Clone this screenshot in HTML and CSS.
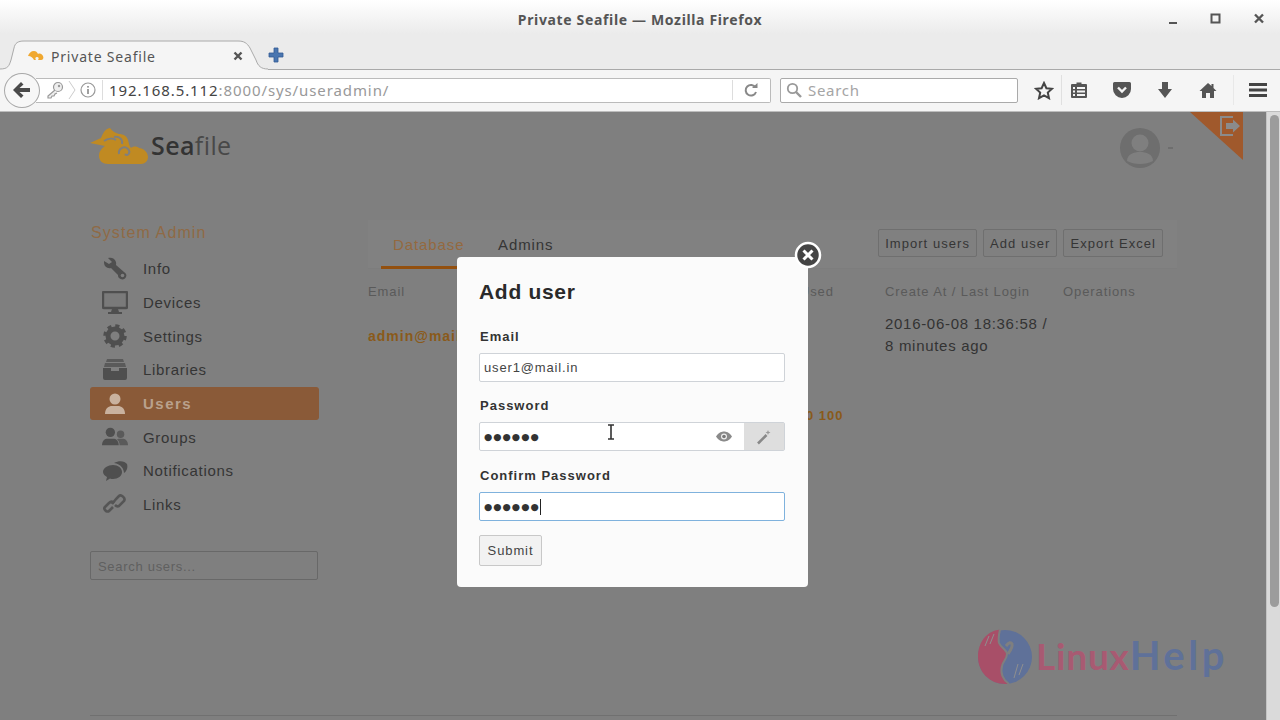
FILE: index.html
```html
<!DOCTYPE html>
<html lang="en">
<head>
    <meta charset="UTF-8">
    <title>Private Seafile - Mozilla Firefox</title>
    <link rel="stylesheet" href="styles.css">
</head>
<body>
    <!-- window title -->
    <div class="titlebar">
        <div class="win-title">Private Seafile — Mozilla Firefox</div>
        <div class="win-btns">
            <svg width="14" height="14" viewBox="0 0 14 14"><rect x="3" y="10" width="8" height="2" fill="#555"/></svg>
            <svg width="14" height="14" viewBox="0 0 14 14"><rect x="2.500" y="2.500" width="8" height="8" fill="none" stroke="#555" stroke-width="2"/></svg>
            <svg width="14" height="14" viewBox="0 0 14 14"><path d="M3 2.500l8 8M11 2.500l-8 8" stroke="#555" stroke-width="2.400"/></svg>
        </div>
    </div>

    <!-- tabs -->
    <div class="tabbar">
        <div class="tab">
            <svg class="tab-bg" width="272" height="30" viewBox="0 0 272 30"><path d="M0 30V29C8 29 9 26 11 20L14 8C15 3 18 1 24 1H238C244 1 247 3 250 8L256 20C258 26 261 29 268 29V30z" fill="#f5f5f5"/><path d="M0 29C8 29 9 26 11 20L14 8C15 3 18 1 24 1H238C244 1 247 3 250 8L256 20C258 26 261 29 268 29" fill="none" stroke="#aaa"/></svg>
            <svg class="tab-fav" width="18" height="12" viewBox="0 0 18 12"><path d="M1 6C2 3 4 1 7 1c2 0 3 1 4 3 2-1 4 0 5 2 1 2 0 4-2 4h-3c1-1 1-3-1-3-2 0-2 2-1 3H7C6 8 4 6 1 6z" fill="#f0a830"/></svg>
            <span class="tab-name">Private Seafile</span>
            <svg class="tab-close" width="10" height="10" viewBox="0 0 10 10"><path d="M1.500 1.500l7 7M8.500 1.500l-7 7" stroke="#555" stroke-width="2.400"/></svg>
        </div>
        <svg class="new-tab" width="16" height="16" viewBox="0 0 16 16"><path d="M6 1h4v5h5v4h-5v5H6v-5H1V6h5z" fill="#4a76b0" stroke="#345c96" stroke-width=".8"/></svg>
    </div>

    <!-- navigation -->
    <div class="navbar">
        <div class="back-btn">
            <svg width="20" height="18" viewBox="0 0 20 18"><path d="M9 1l2.500 2.500L7.500 7H18v4H7.500l4 3.500L9 17 1 9z" fill="#4a4a4a"/></svg>
        </div>
        <div class="urlbar">
            <svg class="url-key" width="20" height="18" viewBox="0 0 20 18"><circle cx="13" cy="6" r="4.500" fill="#eee" stroke="#999" stroke-width="1.200"/><circle cx="14" cy="5" r="1.200" fill="#999"/><path d="M10 9l-7 6v2h3l1-2h2l1-2 2-1" fill="#eee" stroke="#999" stroke-width="1.200"/></svg>
            <svg class="url-chev" width="8" height="24" viewBox="0 0 8 24"><path d="M1 3l6 9-6 9" fill="none" stroke="#ccc"/></svg>
            <svg class="url-info" width="16" height="16" viewBox="0 0 16 16"><circle cx="8" cy="8" r="7" fill="none" stroke="#999" stroke-width="1.200"/><rect x="7.200" y="7" width="1.600" height="5" fill="#888"/><rect x="7.200" y="4" width="1.600" height="1.600" fill="#888"/></svg>
            <span class="url-sep"></span>
            <div class="url-text">192.168.5.112<span class="url-path">:8000/sys/useradmin/</span></div>
            <span class="url-sep"></span>
            <svg class="url-reload" width="16" height="16" viewBox="0 0 16 16"><path d="M12.500 5.500A5.300 5.300 0 1 0 13 10" fill="none" stroke="#888" stroke-width="2"/><path d="M9 6h5.500V1z" fill="#888"/></svg>
        </div>
        <div class="searchbar">
            <svg width="16" height="16" viewBox="0 0 16 16"><circle cx="6.500" cy="6.500" r="4.700" fill="none" stroke="#999" stroke-width="1.800"/><path d="M10 10l5 5" stroke="#999" stroke-width="2.400"/></svg>
            <span>Search</span>
        </div>
        <div class="tools">
            <div class="tool tool-star"><svg width="20" height="19" viewBox="0 0 20 19"><path d="M10 2l2.400 5.200 5.600.6-4.200 3.800 1.200 5.600L10 14.400 5 17.200l1.200-5.600L2 7.800l5.600-.6z" fill="none" stroke="#444" stroke-width="2"/></svg></div>
            <div class="tool tool-list"><svg width="18" height="18" viewBox="0 0 18 18"><path d="M6.500 3V1.500h5V3H16a1 1 0 0 1 1 1v12a1 1 0 0 1-1 1H2a1 1 0 0 1-1-1V4a1 1 0 0 1 1-1z" fill="#555"/><path d="M3 6h2v2H3zM7 6h8v2H7zM3 9.500h2v2H3zM7 9.500h8v2H7zM3 13h2v2H3zM7 13h8v2H7z" fill="#f5f5f5"/></svg></div>
            <div class="tool tool-pocket"><svg width="20" height="18" viewBox="0 0 20 18"><path d="M2.500 1h15A1.500 1.500 0 0 1 19 2.500V8a9 9 0 0 1-18 0V2.500A1.500 1.500 0 0 1 2.500 1z" fill="#555"/><path d="M6 6.500l4 4 4-4" fill="none" stroke="#f5f5f5" stroke-width="2.400"/></svg></div>
            <div class="tool tool-down"><svg width="18" height="18" viewBox="0 0 18 18"><path d="M6 1h6v7h4l-7 9-7-9h4z" fill="#555"/></svg></div>
            <div class="tool tool-home"><svg width="18" height="17" viewBox="0 0 18 17"><path d="M9 1L0.500 9H3v7h4v-5h4v5h4V9h2.500l-3-3V2h-2v2z" fill="#555"/></svg></div>
            <div class="tool tool-menu"><svg width="20" height="16" viewBox="0 0 20 16"><path d="M1 1h18v3H1zM1 6.500h18v3H1zM1 12h18v3H1z" fill="#444"/></svg></div>
        </div>
    </div>

    <!-- page behind the dialog -->
    <div class="viewport">
        <div class="page">
            <div class="header">
                <div class="logo">
                    <svg width="58" height="36" viewBox="0 0 58 36"><path d="M0 15L11 10C13 5 15 1 20 0c2 3 5 5 9 6 4 0 8 2 9 6 1 3 1 6 3 8 2-2 6-2 8 0 4 0 9 4 9 9 0 4-3 7-7 7H18c-5 0-9-3-9-8 0-5 3-8 6-10l-5-1z" fill="#c08a22"/><path d="M14 13c4-3 9-3 12-1M24 9c5-1 9 2 8 7M29 26c-1-5 5-9 9-5 3 3 0 8-3 5" fill="none" stroke="#7f7f7f" stroke-width="2"/></svg>
                    <div class="logo-text"><b>Sea</b>file</div>
                </div>
                <div class="avatar">
                    <svg width="42" height="40" viewBox="0 0 42 40"><circle cx="20" cy="20" r="20" fill="#6e6e6e"/><circle cx="20" cy="15" r="8.500" fill="#7f7f7f"/><path d="M7 33c0-7 7-9 13-9s13 2 13 9c-7 4-19 4-26 0z" fill="#7f7f7f"/></svg>
                    <span class="avatar-dash"></span>
                </div>
            </div>

            <div class="columns">
                <div class="side">
                    <h3 class="side-title">System Admin</h3>
                    <ul class="side-nav">
                        <li><svg viewBox="0 0 26 24"><path d="M2 4l5 3 3-2-4-4c3-1 7 0 8 4 .3 1 .2 2 0 3l8 7c2 1 3 3 2 5-1 3-5 3-7 1-1-1-1-2-1-3l-7-7c-2 .5-4 0-6-2-1-2-1-3-1-5z" fill="#4f4f4f"/><circle cx="20.500" cy="18.500" r="1.800" fill="#7f7f7f"/></svg>Info</li>
                        <li><svg viewBox="0 0 26 24"><rect x="1" y="1" width="24" height="16" rx="1" fill="#7a7a7a" stroke="#4f4f4f" stroke-width="2.400"/><path d="M10 18h6l1 3h3v2H6v-2h3z" fill="#4f4f4f"/></svg>Devices</li>
                        <li><svg viewBox="0 0 26 24"><circle cx="13" cy="12" r="7" fill="none" stroke="#4f4f4f" stroke-width="5"/><circle cx="13" cy="12" r="10" fill="none" stroke="#4f4f4f" stroke-width="3.500" stroke-dasharray="4 3.850"/></svg>Settings</li>
                        <li><svg viewBox="0 0 26 24"><path d="M5 1h16l1 3H4zM3 5h20l1 4H2z" fill="#5a5a5a"/><path d="M1 10h8v3h8v-3h8v10a2 2 0 0 1-2 2H3a2 2 0 0 1-2-2z" fill="#4f4f4f"/></svg>Libraries</li>
                        <li class="active"><svg viewBox="0 0 26 24"><circle cx="13" cy="7" r="5.500" fill="#c9b29f"/><path d="M3 22c0-6 4-8 7-8h6c3 0 7 2 7 8z" fill="#c9b29f"/></svg>Users</li>
                        <li><svg viewBox="0 0 28 24"><circle cx="9" cy="7" r="5" fill="#4f4f4f"/><path d="M0 21c0-5 3-7 6-7h6c3 0 6 2 6 7z" fill="#4f4f4f"/><circle cx="20" cy="9" r="4" fill="#5a5a5a"/><path d="M19 21c0-3-1-5-3-6 1-1 2-1 3-1h3c3 0 6 2 6 7z" fill="#5a5a5a"/></svg>Groups</li>
                        <li><svg viewBox="0 0 26 24"><path d="M10 7c5 0 9 3 9 7s-4 7-9 7c-1 0-2 0-3-.5L3 23l1-4c-2-1-4-3-4-5 0-4 5-7 10-7z" transform="translate(1 -1)" fill="#4f4f4f"/><path d="M12 4c5-3 11-2 13 1 1 3 0 7-3 9 0-4-3-9-10-10z" fill="#4f4f4f"/></svg>Notifications</li>
                        <li><svg viewBox="0 0 26 24"><g fill="none" stroke="#555" stroke-width="2.600"><path d="M11 14l-1 1-3 3c-2 2-6-2-4-4l4-4c2-2 4-1 5 0"/><path d="M10 11l4-5 3-3c2-2 7 2 5 5l-5 5c-2 1-3 0-4-1"/></g></svg>Links</li>
                    </ul>
                    <div class="side-search">Search users...</div>
                </div>

                <div class="main">
                    <div class="tabs">
                        <div class="tab-links">
                            <span class="tab-link on">Database</span>
                            <span class="tab-link">Admins</span>
                        </div>
                        <div class="tab-btns">
                            <span class="btn">Import users</span>
                            <span class="btn">Add user</span>
                            <span class="btn">Export Excel</span>
                        </div>
                    </div>
                    <div class="user-table">
                        <div class="th">Email</div>
                        <div class="th">Space Used</div>
                        <div class="th">Create At / Last Login</div>
                        <div class="th">Operations</div>
                        <div class="td-mail">admin@mail.in</div>
                        <div class="td-used">0 100</div>
                        <div class="td-date">2016-06-08 18:36:58 /<br>8 minutes ago</div>
                        <div></div>
                    </div>
                </div>
            </div>
            <div class="footer-line"></div>

            <div class="watermark">
                <svg width="58" height="58" viewBox="0 0 58 58"><circle cx="29" cy="29" r="27" fill="#5f7199"/><path d="M24 1.500C10 3 2 15 2 29c0 15 12 27 27 27 2 0 3 0 4-.5-6-4-9-11-7-18 1-5 5-7 5-12 0-4-6-6-8-11-1-4 0-9 1-13.500z" fill="#a84f68"/><path d="M24 1.500c-1 4.500-2 9.500-1 13.500 2 5 8 7 8 11 0 5-4 7-5 12-2 7 1 14 7 18" fill="none" stroke="#7f7f7f" stroke-width="2"/><path d="M13 8l-4 10M18 6l-4 10M42 36l-4 14M47 36l-4 11" stroke="#8f8f8f" stroke-width="1"/><path d="M30 18c3-4 5-4 6-2 1 3-2 7-4 10" fill="none" stroke="#7f7f7f" stroke-width="3"/></svg>
                <span class="wm-text"><span class="wm-a">Linux</span><span class="wm-b">Help</span></span>
            </div>

            <div class="corner">
                <svg class="corner-icon" width="22" height="20" viewBox="0 0 22 20"><path d="M14 1H2v18h12" fill="none" stroke="#8b8b8b" stroke-width="2"/><path d="M7 7h7V3.500l7 6.500-7 6.500V13H7z" fill="#8b8b8b"/></svg>
            </div>
        </div>

        <div class="scrollbar"><div class="thumb"></div></div>

        <!-- add user dialog -->
        <div class="modal">
            <h3 class="modal-title">Add user</h3>
            <label class="field-label">Email</label>
            <div class="field"><span class="field-val">user1@mail.in</span></div>
            <label class="field-label">Password</label>
            <div class="field field-pass">
                <span class="field-val dots">●●●●●●</span>
                <svg class="eye" width="16" height="11" viewBox="0 0 16 11"><path d="M0 5.500C3 1 6 .5 8 .5s5 .5 8 5c-3 4.500-6 5-8 5s-5-.5-8-5z" fill="#8a8a8a"/><circle cx="8" cy="5.500" r="3" fill="#eee"/><circle cx="8" cy="5.500" r="1.800" fill="#777"/></svg>
                <span class="wand"><svg width="16" height="16" viewBox="0 0 16 16"><path d="M2 14.500L10.500 6" stroke="#888" stroke-width="2.600"/><path d="M12 1l.7 1.800L14.500 3.500l-1.800.7L12 6l-.7-1.800L9.500 3.500l1.800-.7z" fill="#999"/></svg></span>
            </div>
            <label class="field-label">Confirm Password</label>
            <div class="field field-focus"><span class="field-val dots">●●●●●●</span><span class="caret"></span></div>
            <button class="submit">Submit</button>
            <div class="modal-close">
                <svg width="28" height="28" viewBox="0 0 28 28"><circle cx="14" cy="14" r="12" fill="#444" stroke="#fff" stroke-width="2.500"/><path d="M9.500 9.500l9 9M18.500 9.500l-9 9" stroke="#fff" stroke-width="3"/></svg>
            </div>
            <svg class="ibeam" width="10" height="16" viewBox="0 0 10 16"><path d="M2 1h6M5 1v14M2 15h6" fill="none" stroke="#333" stroke-width="1.600"/></svg>
        </div>
    </div>
</body>
</html>
```

FILE: styles.css
```css
* {
    margin: 0;
    padding: 0;
    box-sizing: border-box;
}
html, body {
    width: 1280px;
    height: 720px;
    overflow: hidden;
}
body {
    font-family: "Liberation Sans", Arial, sans-serif;
    display: flex;
    flex-direction: column;
    background: #7f7f7f;
    color: #333;
}

/* window title */
.titlebar {
    height: 40px;
    position: relative;
    display: flex;
    justify-content: center;
    align-items: center;
    background: linear-gradient(#ffffff, #ebebeb 85%);
    padding-bottom: 2px;
}
.win-title {
    font-family: "Noto Sans", sans-serif;
    font-size: 14px;
    font-weight: 700;
    letter-spacing: .65px;
    color: #555;
}
.win-btns {
    position: absolute;
    right: 14px;
    top: 12px;
    display: flex;
    gap: 29px;
}

/* tabs */
.tabbar {
    height: 30px;
    display: flex;
    align-items: flex-end;
    background: #ebebeb;
    border-bottom: 1px solid #a9a9a9;
    padding-left: 14px;
}
.tab {
    width: 244px;
    height: 30px;
    margin-bottom: -1px;
    display: flex;
    align-items: center;
    padding: 2px 15px 0 13px;
    position: relative;
}
.tab-bg {
    position: absolute;
    left: -14px;
    top: 0;
}
.tab-fav, .tab-name, .tab-close {
    position: relative;
}
.tab-name {
    font-family: "Noto Sans", sans-serif;
    font-size: 14px;
    letter-spacing: .8px;
    color: #555;
    margin-left: 6px;
    flex: 1;
}
.new-tab {
    margin: 0 0 6px 10px;
    position: relative;
}

/* navigation */
.navbar {
    height: 42px;
    display: flex;
    align-items: center;
    background: #f5f5f5;
    border-bottom: 1px solid #bdbdbd;
    padding: 0 0 1px 4px;
}
.navbar > * {
    flex: none;
}
.back-btn {
    width: 36px;
    height: 35px;
    border-radius: 50%;
    background: #f7f7f7;
    border: 1px solid #a8a8a8;
    display: flex;
    justify-content: center;
    align-items: center;
    margin-right: -4px;
    position: relative;
}
.urlbar {
    width: 735px;
    height: 25px;
    display: flex;
    align-items: center;
    background: #fff;
    border: 1px solid #bbb;
    border-left: none;
    border-radius: 0 2px 2px 0;
}
.url-key {
    margin-left: 9px;
}
.url-chev {
    margin-left: 3px;
}
.url-info {
    margin-left: 4px;
}
.url-sep {
    width: 1px;
    height: 20px;
    background: #ddd;
    margin-left: 6px;
}
.url-text {
    font-family: "Noto Sans", sans-serif;
    font-size: 15px;
    letter-spacing: .9px;
    color: #444;
    margin-left: 6px;
    flex: 1;
}
.url-path {
    color: #999;
}
.url-reload {
    margin: 0 11px 0 10px;
}
.searchbar {
    width: 238px;
    height: 25px;
    margin-left: 9px;
    display: flex;
    align-items: center;
    gap: 6px;
    padding-left: 5px;
    background: #fff;
    border: 1px solid #aaa;
    border-radius: 2px;
}
.searchbar span {
    font-family: "Noto Sans", sans-serif;
    font-size: 15px;
    letter-spacing: .7px;
    color: #a5a5a5;
}
.tools {
    display: flex;
    align-items: center;
    margin-left: 8px;
}
.tool {
    display: flex;
    justify-content: center;
    align-items: center;
    height: 30px;
}
.tool-star { width: 36px; border-right: 1px solid #e0e0e0; }
.tool-list { width: 34px; }
.tool-pocket { width: 52px; }
.tool-down { width: 34px; }
.tool-home { width: 52px; border-right: 1px solid #e8e8e8; }
.tool-menu { width: 47px; }

/* page behind the dialog */
.viewport {
    flex: 1;
    display: flex;
    position: relative;
    overflow: hidden;
}
.page {
    flex: 1;
    position: relative;
    padding-left: 90px;
    background: #7f7f7f;
}
.scrollbar {
    width: 14px;
    background: #dadada;
    border-left: 1px solid #c4c4c4;
    padding: 3px 1px 0 3px;
}
.thumb {
    height: 492px;
    background: #9c9c9c;
    border-radius: 5px;
}
.header {
    height: 108px;
    width: 1087px;
    display: flex;
    justify-content: space-between;
    align-items: flex-start;
    padding-top: 16px;
}
.logo {
    display: flex;
    align-items: center;
    gap: 3px;
}
.logo-text {
    font-family: "Open Sans", sans-serif;
    font-size: 25px;
    letter-spacing: .4px;
    color: #484848;
    margin-top: -2px;
}
.logo-text b {
    font-weight: 600;
    color: #333;
}
.avatar {
    margin-right: 4px;
    display: flex;
    align-items: center;
    gap: 6px;
}
.avatar-dash {
    width: 5px;
    height: 2px;
    background: #6e6e6e;
}
.columns {
    display: flex;
    gap: 50px;
}
.side {
    width: 229px;
}
.side-title {
    height: 32px;
    font-size: 16px;
    font-weight: 400;
    line-height: 25px;
    letter-spacing: 1.1px;
    color: #8f6a45;
    padding-left: 1px;
}
.side-nav {
    list-style: none;
}
.side-nav li {
    height: 33.7px;
    display: flex;
    align-items: center;
    gap: 15px;
    padding-left: 12px;
    font-size: 15px;
    letter-spacing: .7px;
    color: #353535;
}
.side-nav svg {
    width: 26px;
    height: 24px;
    flex: none;
}
.side-nav li.active {
    background: #8a5a38;
    border-radius: 3px;
    color: #b9a18d;
    font-weight: 700;
    letter-spacing: 1.5px;
}
.side-search {
    width: 228px;
    height: 29px;
    margin-top: 29px;
    padding: 7px 7px;
    font-size: 13px;
    letter-spacing: .7px;
    color: #606060;
    border: 1px solid #686868;
    border-radius: 2px;
}
.main {
    width: 809px;
    margin-left: -1px;
}
.tabs {
    height: 49px;
    display: flex;
    justify-content: space-between;
    align-items: center;
    padding: 0 14px 0 13px;
    background: #818181;
    border-bottom: 1px solid #7d7d7d;
}
.tab-links {
    display: flex;
    align-items: center;
    gap: 21px;
    height: 49px;
}
.tab-link {
    height: 49px;
    padding: 16px 0 0 12px;
    font-size: 15px;
    letter-spacing: .9px;
    color: #353535;
}
.tab-link.on {
    color: #94693f;
    border-bottom: 3px solid #93500f;
    width: 90px;
    margin-right: -6px;
}
.tab-btns {
    display: flex;
    gap: 6px;
    padding-bottom: 2px;
}
.btn {
    height: 28px;
    padding: 6px 6px;
    font-size: 13px;
    letter-spacing: 1.05px;
    color: #353535;
    border: 1px solid #6f6f6f;
    border-radius: 2px;
    background: #808080;
}
.user-table {
    display: grid;
    grid-template-columns: 386px 131px 178px 1fr;
    padding-top: 15px;
}
.th {
    height: 29px;
    font-size: 13px;
    line-height: 16px;
    letter-spacing: .9px;
    color: #5a5a5a;
}
.td-mail {
    font-size: 14px;
    font-weight: 700;
    letter-spacing: 1px;
    color: #8a5a1a;
    padding-top: 15px;
}
.td-used {
    font-size: 13px;
    font-weight: 700;
    letter-spacing: 1px;
    color: #8a5a1a;
    padding: 95px 0 0 52px;
}
.td-date {
    font-size: 15px;
    line-height: 22px;
    letter-spacing: .7px;
    color: #333;
}
.footer-line {
    position: absolute;
    left: 90px;
    top: 603px;
    width: 1087px;
    height: 1px;
    background: #707070;
}
.watermark {
    position: absolute;
    left: 976px;
    top: 516px;
    display: flex;
    align-items: center;
    gap: 2px;
}
.wm-text {
    font-family: "Lato", sans-serif;
    font-size: 37px;
    font-weight: 700;
    margin-top: -4px;
}
.wm-a {
    color: #a85a72;
    letter-spacing: .8px;
}
.wm-b {
    color: #5f7199;
    font-size: 40px;
    letter-spacing: 3.500px;
}
.corner {
    position: absolute;
    left: 1190px;
    top: 0;
    width: 53px;
    height: 48px;
    background: #a0592c;
    clip-path: polygon(0 0, 100% 0, 100% 100%);
}
.corner-icon {
    position: absolute;
    right: 2px;
    top: 4px;
}

/* add user dialog */
.modal {
    position: absolute;
    left: 457px;
    top: 145px;
    width: 351px;
    height: 330px;
    padding: 22px 22px 0;
    background: #fbfbfb;
    border-radius: 4px;
}
.modal-title {
    font-size: 21px;
    font-weight: 700;
    line-height: 26px;
    letter-spacing: .7px;
    color: #2a2a2a;
    margin-bottom: 24px;
}
.field-label {
    display: block;
    height: 24px;
    padding-left: 1px;
    font-size: 13px;
    font-weight: 700;
    line-height: 16px;
    letter-spacing: 1px;
    color: #333;
}
.field {
    width: 306px;
    height: 29px;
    margin-bottom: 16px;
    display: flex;
    align-items: center;
    padding-left: 4px;
    background: #fff;
    border: 1px solid #cfd3d8;
    border-radius: 2px;
    font-size: 13px;
    letter-spacing: .85px;
    color: #444;
}
.field-pass {
    margin-bottom: 17px;
    position: relative;
}
.field-focus {
    border-color: #7fb2dd;
    margin-bottom: 14px;
}
.dots {
    font-family: "DejaVu Sans", sans-serif;
    font-size: 9.500px;
    letter-spacing: 1px;
    color: #333;
}
.eye {
    margin-left: auto;
    margin-right: 12px;
}
.wand {
    width: 40px;
    height: 27px;
    display: flex;
    justify-content: center;
    align-items: center;
    background: #dedede;
}
.caret {
    width: 1px;
    height: 16px;
    background: #222;
}
.submit {
    display: block;
    width: 63px;
    height: 31px;
    font-family: "Liberation Sans", Arial, sans-serif;
    font-size: 13px;
    letter-spacing: .9px;
    color: #444;
    background: #f2f2f2;
    border: 1px solid #c8c8c8;
    border-radius: 2px;
}
.modal-close {
    position: absolute;
    right: -14px;
    top: -16px;
    width: 28px;
    height: 28px;
}
.ibeam {
    position: absolute;
    left: 149px;
    top: 167px;
}
```
